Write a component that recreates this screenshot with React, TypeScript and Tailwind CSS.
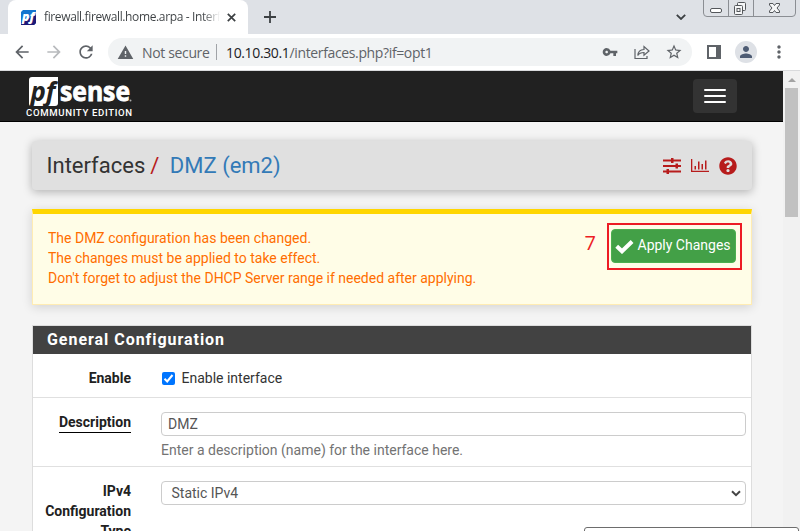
import type { ReactNode } from 'react';
import { MdArrowBack, MdArrowForward, MdRefresh, MdWarning, MdVpnKey, MdStarBorder, MdPerson, MdMoreVert } from 'react-icons/md';
import { FaQuestionCircle } from 'react-icons/fa';

function Favicon() {
  return (
    <svg width="15" height="15" viewBox="0 0 15 15" className="shrink-0 overflow-visible">
      <path d="M2 0H15V13L13 15H0V2Z" fill="#1475cf" />
      <path d="M15 5V13L13 15H0V12Z" fill="#1e1a78" />
      <text x="1" y="10.8" fontFamily="Open Sans, sans-serif" fontStyle="italic" fontWeight="800" fontSize="11.5" textLength="12.5" lengthAdjust="spacingAndGlyphs" fill="#fff">pf</text>
    </svg>
  );
}

function TabStrip() {
  return (
    <div className="relative flex h-[34px] shrink-0 bg-[#dee1e6]">
      <div className="ml-2 flex h-[34px] w-[240px] items-center rounded-t-[8px] bg-white pl-[13px]">
        <Favicon />
        <span className="ml-2 w-[176px] overflow-hidden bg-gradient-to-r from-[#3c4043] from-[90%] to-transparent bg-clip-text font-['Open_Sans',sans-serif] text-[12px] tracking-[-0.37px] whitespace-nowrap text-transparent">
          firewall.firewall.home.arpa - Interf
        </span>
        <svg width="9" height="9" viewBox="0 0 9 9" className="ml-[7px]" stroke="#3c4043" strokeWidth="1.7">
          <path d="M.8.8 8.2 8.2M8.2.8.8 8.2" />
        </svg>
      </div>
      <svg width="12" height="12" viewBox="0 0 12 12" className="mt-[11px] ml-4" stroke="#3c4043" strokeWidth="1.8">
        <path d="M6 0V12M0 6H12" />
      </svg>
      <svg width="10" height="6" viewBox="0 0 10 6" className="mt-[14px] ml-auto mr-[17px]" fill="none" stroke="#3c4043" strokeWidth="1.8">
        <path d="M.8.8 5 5 9.2.8" />
      </svg>
      <svg width="94" height="18" viewBox="0 0 94 18" className="mr-[3px]" fill="none" stroke="#8b8e93">
        <path d="M.5 0V13Q.5 16.5 4 16.5H89Q92.5 16.5 92.5 13V0M25.5 0V16M50.5 0V16" />
        <rect x="7.500" y="8.500" width="11" height="4" rx="1.500" fill="#fff" stroke="#54575b" />
        <g stroke="#54575b" fill="#f5f6f7">
          <rect x="34.500" y="2.500" width="8" height="8" rx="1" />
          <rect x="31.500" y="5.500" width="8" height="9" rx="1" />
          <rect x="34" y="8.500" width="3" height="3" />
        </g>
        <path d="M66.500 3.500H70L71.500 5.500 73 3.500H76.500V5L74 8 76.500 11V12.500H73L71.500 10.500 70 12.500H66.500V11L69 8 66.500 5Z" fill="#f5f6f7" stroke="#54575b" />
      </svg>
    </div>
  );
}

function Toolbar() {
  return (
    <div className="flex h-[37px] shrink-0 items-center border-b border-[#d9dadc] bg-white font-['Open_Sans',sans-serif] text-[14px] text-[#5f6368]">
      <MdArrowBack className="ml-3 size-5 shrink-0" />
      <MdArrowForward className="ml-3 size-5 shrink-0 text-[#b8babd]" />
      <MdRefresh className="ml-3 size-5 shrink-0" />
      <div className="ml-3 flex h-7 w-[584px] shrink-0 items-center rounded-full bg-[#f1f3f4] pl-[9px]">
        <MdWarning className="size-[17px]" />
        <span className="ml-2 w-[66px] tracking-[-0.35px] whitespace-nowrap">Not secure</span>
        <span className="ml-[8px] h-4 w-px bg-[#a0a3a7]" />
        <span className="ml-[9px] tracking-[-0.36px] whitespace-nowrap"><span className="text-[#202124]">10.10.30.1</span>/interfaces.php?if=opt1</span>
        <MdVpnKey className="mr-[16px] ml-auto size-[16px]" />
        <svg width="16" height="15" viewBox="0 0 16 15" className="mr-[15px]" fill="none" stroke="#5f6368" strokeWidth="1.200">
          <path d="M1 4V13.500H13V11M3.800 10.500C4 6.500 6.500 4.700 10 4.500V1.500L15 6 10 10.200V7.500C7 7.500 5 8.500 3.800 10.500Z" />
        </svg>
        <MdStarBorder className="mr-[9px] size-[18px]" />
      </div>
      <svg width="14" height="14" viewBox="0 0 14 14" className="ml-[15px] shrink-0">
        <path d="M0 0H14V14H0ZM2 2V12H9V2Z" fill="#5f6368" fillRule="evenodd" />
      </svg>
      <div className="ml-[14px] flex size-[22px] shrink-0 items-center justify-center rounded-full bg-[#dee1e6]">
        <MdPerson className="size-[18px] text-[#4d5b73]" />
      </div>
      <MdMoreVert className="ml-3 size-[20px] shrink-0" />
    </div>
  );
}

function Logo() {
  return (
    <div className="ml-[26px] flex w-[110px] flex-col">
      <svg width="108" height="31" viewBox="0 0 108 31" role="img" className="overflow-visible">
        <path d="M6 2H32V28Q32 31 29 31H5Q3 31 3 29V5Q3 2 6 2Z" fill="#fff" />
        <text x="4.500" y="25.500" fontFamily="Open Sans, sans-serif" fontWeight="700" fontStyle="italic" fontSize="27" textLength="25" lengthAdjust="spacingAndGlyphs" fill="#212121">pf</text>
        <text x="34" y="25.500" fontFamily="Open Sans, sans-serif" fontWeight="700" fontSize="26" textLength="70" lengthAdjust="spacingAndGlyphs" fill="#fff" stroke="#fff" strokeWidth=".8">sense</text>
        <circle cx="104.500" cy="25.500" r="1" fill="#aaa" />
      </svg>
      <span className="mt-[1.500px] text-[9.600px] leading-[10px] font-medium tracking-[0.65px] whitespace-nowrap text-white">COMMUNITY EDITION</span>
    </div>
  );
}

function Navbar() {
  return (
    <div className="flex h-[51px] items-start border-b border-black bg-[#212121]">
      <div className="pt-1"><Logo /></div>
      <button className="mt-2 mr-[46px] ml-auto flex h-[34px] w-11 flex-col items-center justify-center gap-1 rounded-[4px] bg-[#333]">
        <span className="h-0.5 w-[22px] rounded-[1px] bg-white" />
        <span className="h-0.5 w-[22px] rounded-[1px] bg-white" />
        <span className="h-0.5 w-[22px] rounded-[1px] bg-white" />
      </button>
    </div>
  );
}

function PageHeader() {
  return (
    <div className="mt-[19px] flex h-[49px] items-center rounded-[4px] bg-[#e0e0e0] pr-[15.500px] pl-[14.500px] shadow-[0_2px_10px_rgba(0,0,0,0.28)]">
      <h1 className="text-[22px] whitespace-nowrap text-[#333]">
        Interfaces<span className="ml-[5px] text-[#b71c1c]">/</span>
        <span className="ml-[10.500px] text-[#337ab7]">DMZ (em2)</span>
      </h1>
      <svg width="18" height="16" viewBox="0 0 18 16" className="ml-auto" fill="#b71c1c">
        <path d="M0 1.500H18V3.500H0ZM0 7H18V9H0ZM0 12.500H18V14.500H0ZM8 0H10.500V5H8ZM12.500 5.500H15V10.500H12.500ZM3.500 11H6V16H3.500Z" />
      </svg>
      <svg width="18" height="15" viewBox="0 0 18 15" className="ml-[10px]" fill="#b71c1c">
        <path d="M0 1H1.300V12.700H18V14H0ZM3.500 8H5V11.500H3.500ZM7 3.500H8.500V11.500H7ZM10.500 6H12V11.500H10.500ZM14 2.500H15.500V11.500H14Z" />
      </svg>
      <FaQuestionCircle className="ml-[10px] size-[18px] text-[#b71c1c]" />
    </div>
  );
}

function ChangeAlert() {
  return (
    <div className="mt-[19px] flex h-24 w-[720px] border border-t-[5px] border-[#ffecb3] border-t-[#ffd600] bg-[#fffde7] pl-[15px] shadow-[0_2px_10px_rgba(0,0,0,0.14)]">
      <div className="pt-[14px] text-[14px] leading-[20px] whitespace-nowrap text-[#ff6d00]">
        <p>The DMZ configuration has been changed.</p>
        <p>The changes must be applied to take effect.</p>
        <p>Don't forget to adjust the DHCP Server range if needed after applying.</p>
      </div>
      <span className="mt-[18px] mr-[11px] ml-auto font-['Open_Sans',sans-serif] text-[20px] leading-[22px] text-[#ed1c24]">7</span>
      <div className="mt-[9px] mr-[9px] h-[47px] w-[135px] border-2 border-[#ed1c24] px-[2px] pt-1">
        <button className="flex h-[34px] w-[125px] items-center rounded-[4px] border border-[#4caf50] bg-[#43a047] pb-px pl-[3px] text-[14px] whitespace-nowrap text-white">
          <svg width="20" height="15" viewBox="0 0 20 15" className="mt-px mr-[2.500px] shrink-0">
            <path d="M1.700 7.200 7 12.300 17.100 2.500" fill="none" stroke="#fff" strokeWidth="4" />
          </svg>
          Apply Changes
        </button>
      </div>
    </div>
  );
}

function Row({ label, className, children }: { label: ReactNode; className: string; children: ReactNode }) {
  return (
    <div className={`flex border-b border-[#e0e0e0] ${className}`}>
      <div className="w-[98px] shrink-0 text-right text-[14px] leading-[20px] font-bold text-[#212121]">{label}</div>
      <div className="ml-[30px] w-[585px]">{children}</div>
    </div>
  );
}

function ConfigPanel() {
  return (
    <div className="mt-5 h-[230px] w-[720px] border border-[#ddd] bg-white">
      <h2 className="h-7 bg-[#424242] pl-[14px] text-[16px] leading-[28px] font-bold tracking-[0.96px] text-white">General Configuration</h2>
      <Row label="Enable" className="h-11 pt-[14px]">
        <label className="flex items-center text-[14px] leading-[20px] text-[#333]">
          <span className="mt-px ml-px flex size-[13px] items-center justify-center rounded-[2px] bg-[#0075ff]">
            <svg width="11" height="11" viewBox="0 0 11 11" fill="none" stroke="#fff" strokeWidth="2"><path d="m1.500 5.800 2.700 2.700L9.500 2" /></svg>
          </span>
          <span className="ml-[6.500px]">Enable interface</span>
        </label>
      </Row>
      <Row label={<span className="inline-block h-5 border-b border-black leading-[19px]">Description</span>} className="h-[69px] pt-[14px]">
        <div className="flex h-6 items-center rounded-[4px] border border-[#ccc] pl-[6px] text-[14px] text-[#555]">DMZ</div>
        <p className="mt-[4px] text-[14px] leading-[20px] text-[#737373]">Enter a description (name) for the interface here.</p>
      </Row>
      <Row label={<>IPv4<br />Configuration<br />Type</>} className="h-[90px] pt-[14px]">
        <div className="flex h-6 items-center justify-between rounded-[4px] border border-[#ccc] pr-[4px] pl-[9.500px] text-[14px] text-[#555]">
          Static IPv4
          <svg width="10" height="7" viewBox="0 0 10 7" fill="none" stroke="#444" strokeWidth="2"><path d="m1 1.200 4 4 4-4" /></svg>
        </div>
      </Row>
    </div>
  );
}

export default function App() {
  return (
    <div className="relative flex h-[531px] w-[800px] flex-col overflow-hidden font-[Roboto,sans-serif]">
      <TabStrip />
      <Toolbar />
      <div className="flex h-[460px] shrink-0 overflow-hidden">
        <main className="w-[783px] bg-[#f4f4f4]">
          <Navbar />
          <div className="mx-[32px] w-[720px]">
            <PageHeader />
            <ChangeAlert />
            <ConfigPanel />
          </div>
        </main>
        <div className="flex w-[17px] flex-col items-center bg-[#f1f1f1]">
          <svg width="8" height="4" viewBox="0 0 8 4" className="mt-[7px] mb-[6px]"><path d="M4 0 8 4H0Z" fill="#a3a3a3" /></svg>
          <div className="h-[129px] w-[13px] bg-[#c1c1c1]" />
        </div>
      </div>
      <div className="absolute top-[527px] left-[584px] h-8 w-[215px] rounded-[3px] border border-[#6d6d6d] bg-white" />
    </div>
  );
}
